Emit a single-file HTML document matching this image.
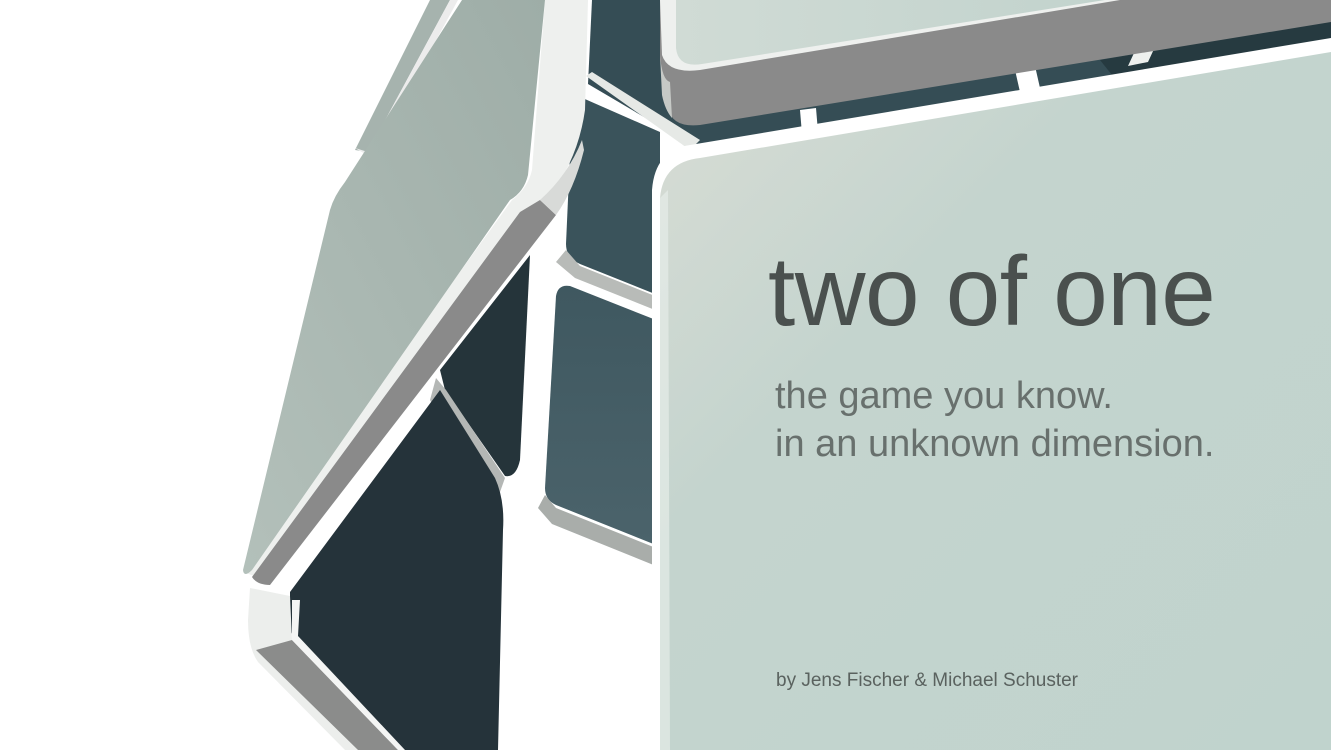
<!DOCTYPE html>
<html><head><meta charset="utf-8"><style>
html,body{margin:0;padding:0;background:#fff;}
body{width:1331px;height:750px;overflow:hidden;position:relative;font-family:"Liberation Sans",sans-serif;}
svg{position:absolute;left:0;top:0;}
.t{position:absolute;white-space:nowrap;font-weight:100;}
</style></head><body>
<svg width="1331" height="750" viewBox="0 0 1331 750">
<defs>
<linearGradient id="face" x1="0" y1="0" x2="1" y2="1">
<stop offset="0" stop-color="#d9ddd5"/><stop offset="0.35" stop-color="#c4d4ce"/><stop offset="1" stop-color="#c0d3cd"/></linearGradient>
<linearGradient id="lface" x1="0" y1="1" x2="1" y2="0">
<stop offset="0" stop-color="#b3c0ba"/><stop offset="1" stop-color="#9eada7"/></linearGradient>
<linearGradient id="cell2" x1="0" y1="0" x2="0" y2="1">
<stop offset="0" stop-color="#3f5860"/><stop offset="1" stop-color="#4b636b"/></linearGradient>
<linearGradient id="uface" x1="0" y1="0" x2="1" y2="0">
<stop offset="0" stop-color="#d0dbd5"/><stop offset="1" stop-color="#c2d3cd"/></linearGradient>
</defs>
<polygon points="592,0 1331,0 1331,45 700,150 588,84" fill="#354d55"/>
<polygon points="1100,60 1331,20 1331,45 1120,85" fill="#263a40"/>
<polygon points="586,76 592,72 700,140 690,150" fill="#e6e9e6"/>
<polygon points="800,110 816,108 818,132 802,134" fill="#fff"/>
<polygon points="1015,70 1035,66 1040,88 1020,92" fill="#fff"/>
<polygon points="1140,40 1160,36 1148,62 1128,66" fill="#eef0ee"/>
<path d="M578,96 L660,132 L660,296 L580,264 Q566,258 566,244 L572,110 Q574,96 578,96Z" fill="#3a535b"/>
<polygon points="566,250 580,266 660,298 660,312 575,278 556,262" fill="#b8bbb8"/>
<path d="M570,286 L656,320 L656,545 L556,505 Q545,500 545,488 L556,296 Q558,284 570,286Z" fill="url(#cell2)"/>
<polygon points="545,495 556,508 656,548 656,566 552,524 538,508" fill="#a9adaa"/>
<path d="M440,370 L530,255 L520,460 Q516,478 505,476 L445,390Z" fill="#25343a"/>
<polygon points="436,378 446,390 505,478 500,492 484,490 430,400" fill="#b4b7b5"/>
<path d="M290,592 L440,390 L495,478 Q505,500 503,530 L498,750 L398,750 L296,642 Q288,630 290,612Z" fill="#25333a"/>
<path d="M250,588 L290,596 L292,640 L398,750 L345,750 L258,662 Q248,648 248,620Z" fill="#eceeec"/>
<path d="M256,650 L292,640 L398,750 L358,750Z" fill="#8b8c8b"/>
<path d="M292,600 L300,600 L298,636 L405,750 L398,750 L292,640Z" fill="#f4f5f4"/>
<polygon points="360,140 430,0 450,0 368,152 355,150" fill="#a6b3ae"/>
<polygon points="355,148 368,152 450,0 458,0 372,158" fill="#ececec"/>
<!-- left tile: white side/cap then gray band -->
<path d="M243,572 L512,200 Q528,188 532,170 L545,0 L588,0 L585,110 Q578,160 548,198 L260,578Z" fill="#eef0ee"/>
<path d="M252,577 L520,212 L540,200 L556,215 L270,585 Q257,585 252,577Z" fill="#8a8a8a"/>
<path d="M540,200 Q568,175 582,140 L584,150 Q574,190 556,215Z" fill="#d8dad8"/>
<path d="M462,0 L545,0 L528,175 Q524,192 510,200 L252,570 Q244,578 243,570 L330,210 Q334,196 345,182Z" fill="url(#lface)"/>
<path d="M660,0 L1331,0 L1331,22 L700,125 Q672,128 668,108 L660,60Z" fill="#8a8a8a"/>
<path d="M660,0 L1120,0 L700,70 Q668,74 662,55Z" fill="#eef0ee"/>
<path d="M676,0 L1105,0 L702,64 Q678,68 676,48Z" fill="url(#uface)"/>
<path d="M660,55 Q662,80 670,82 L672,118 Q665,110 662,95Z" fill="#c6c9c6"/>
<path d="M690,145 L1331,38 L1331,750 L652,750 L652,190 Q655,150 690,145Z" fill="#ffffff"/>
<path d="M700,158 L1331,52 L1331,750 L660,750 L660,198 Q663,162 700,158Z" fill="url(#face)"/>
<path d="M660,198 L668,190 L670,750 L660,750Z" fill="#e6ece8" opacity="0.7"/>
</svg>
<div class="t" style="left:768px;top:236px;font-size:98px;line-height:110px;color:#4a504e;letter-spacing:-0.5px;">two of one</div>
<div class="t" style="left:775px;top:372px;font-size:38px;line-height:48px;color:#68706d;">the game you know.<br>in an unknown dimension.</div>
<div class="t" style="left:776px;top:670px;font-size:19px;line-height:22px;color:#5a625f;">by Jens Fischer &amp; Michael Schuster</div>
</body></html>
